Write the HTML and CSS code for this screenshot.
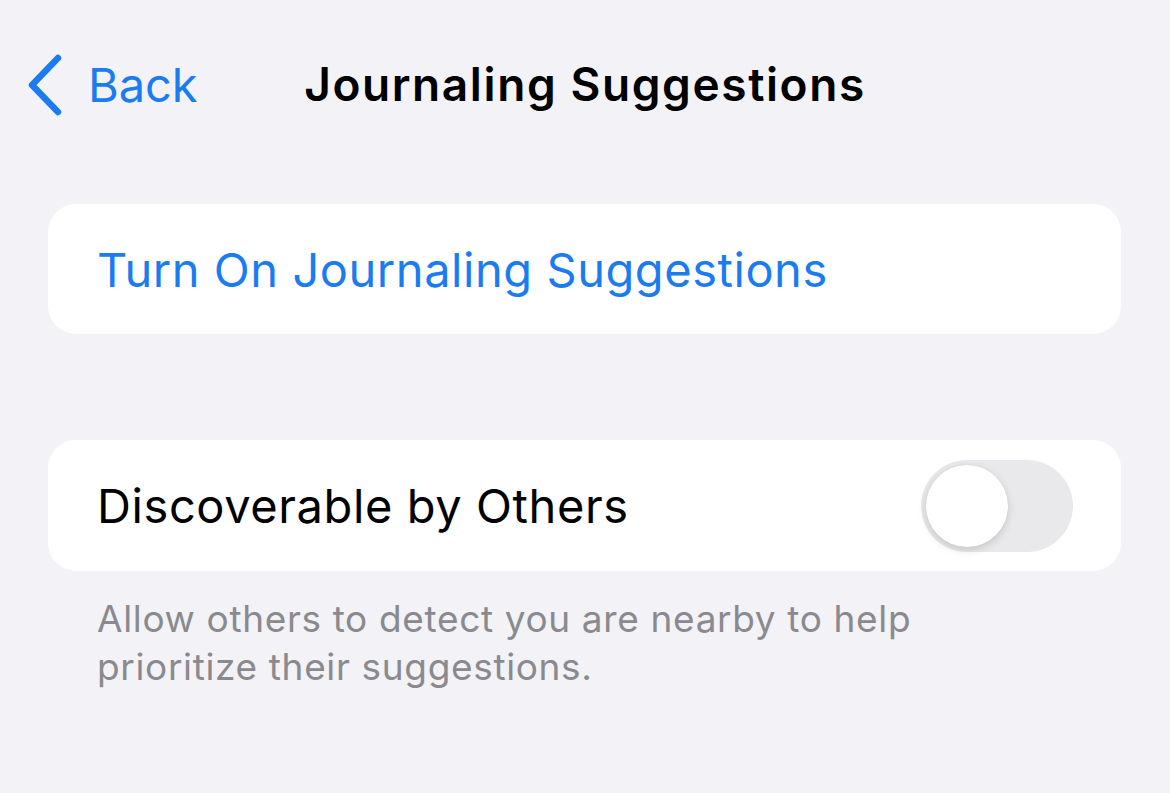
FILE: index.html
```html
<!DOCTYPE html>
<html>
<head>
<meta charset="utf-8">
<link rel="stylesheet" href="styles.css">
</head>
<body>
<div class="nav">
  <div class="back">
    <svg class="chev" width="40" height="62" viewBox="0 0 40 62"><path d="M33 4 L7 31 L33 58" fill="none" stroke="#1a7cf0" stroke-width="6.5" stroke-linecap="round" stroke-linejoin="round"/></svg>
    <span class="back-text">Back</span>
  </div>
  <div class="title">Journaling Suggestions</div>
  <div></div>
</div>
<div class="card card1">
  <span class="link">Turn On Journaling Suggestions</span>
</div>
<div class="card card2">
  <span class="label">Discoverable by Others</span>
  <div class="toggle"><div class="knob"></div></div>
</div>
<p class="footer">Allow others to detect you are nearby to help<br>prioritize their suggestions.</p>
</body>
</html>
```
FILE: styles.css
```css
html, body {
  margin: 0;
  padding: 0;
  background: #f2f2f7;
  font-family: Inter, "Noto Sans", sans-serif;
  width: 1170px;
  height: 793px;
  overflow: hidden;
}
.nav {
  height: 168px;
  display: grid;
  grid-template-columns: 1fr auto 1fr;
  align-items: center;
}
.back {
  display: flex;
  align-items: center;
  padding-left: 25px;
  gap: 23px;
}
.chev { display: block; margin-top: 2px; }
.back-text {
  color: #1a7cf0;
  font-size: 47px;
  letter-spacing: -0.1px;
}
.title {
  font-size: 46px;
  font-weight: 600;
  color: #000;
  letter-spacing: 1.6px;
}
.card {
  background: #fff;
  margin: 0 49px 0 48px;
  border-radius: 28px;
  display: flex;
  align-items: center;
  padding: 0 48px 0 49px;
}
.card1 {
  margin-top: 36px;
  height: 130px;
}
.link {
  color: #1a7cf0;
  font-size: 47px;
  letter-spacing: 0.55px;
}
.card2 {
  margin-top: 106px;
  height: 131px;
  justify-content: space-between;
}
.label {
  font-size: 47px;
  color: #000;
  letter-spacing: 0.6px;
}
.toggle {
  width: 152px;
  height: 92px;
  border-radius: 46px;
  background: #e9e9eb;
  position: relative;
}
.knob {
  position: absolute;
  left: 5px;
  top: 5px;
  width: 82px;
  height: 82px;
  border-radius: 50%;
  background: #fff;
  box-shadow: 0 3px 8px rgba(0,0,0,0.15), 0 0 1px rgba(0,0,0,0.1);
}
.footer {
  margin: 24px 0 0 97px;
  font-size: 37px;
  line-height: 48px;
  color: #8a8a8e;
  letter-spacing: 0.65px;
}
```
